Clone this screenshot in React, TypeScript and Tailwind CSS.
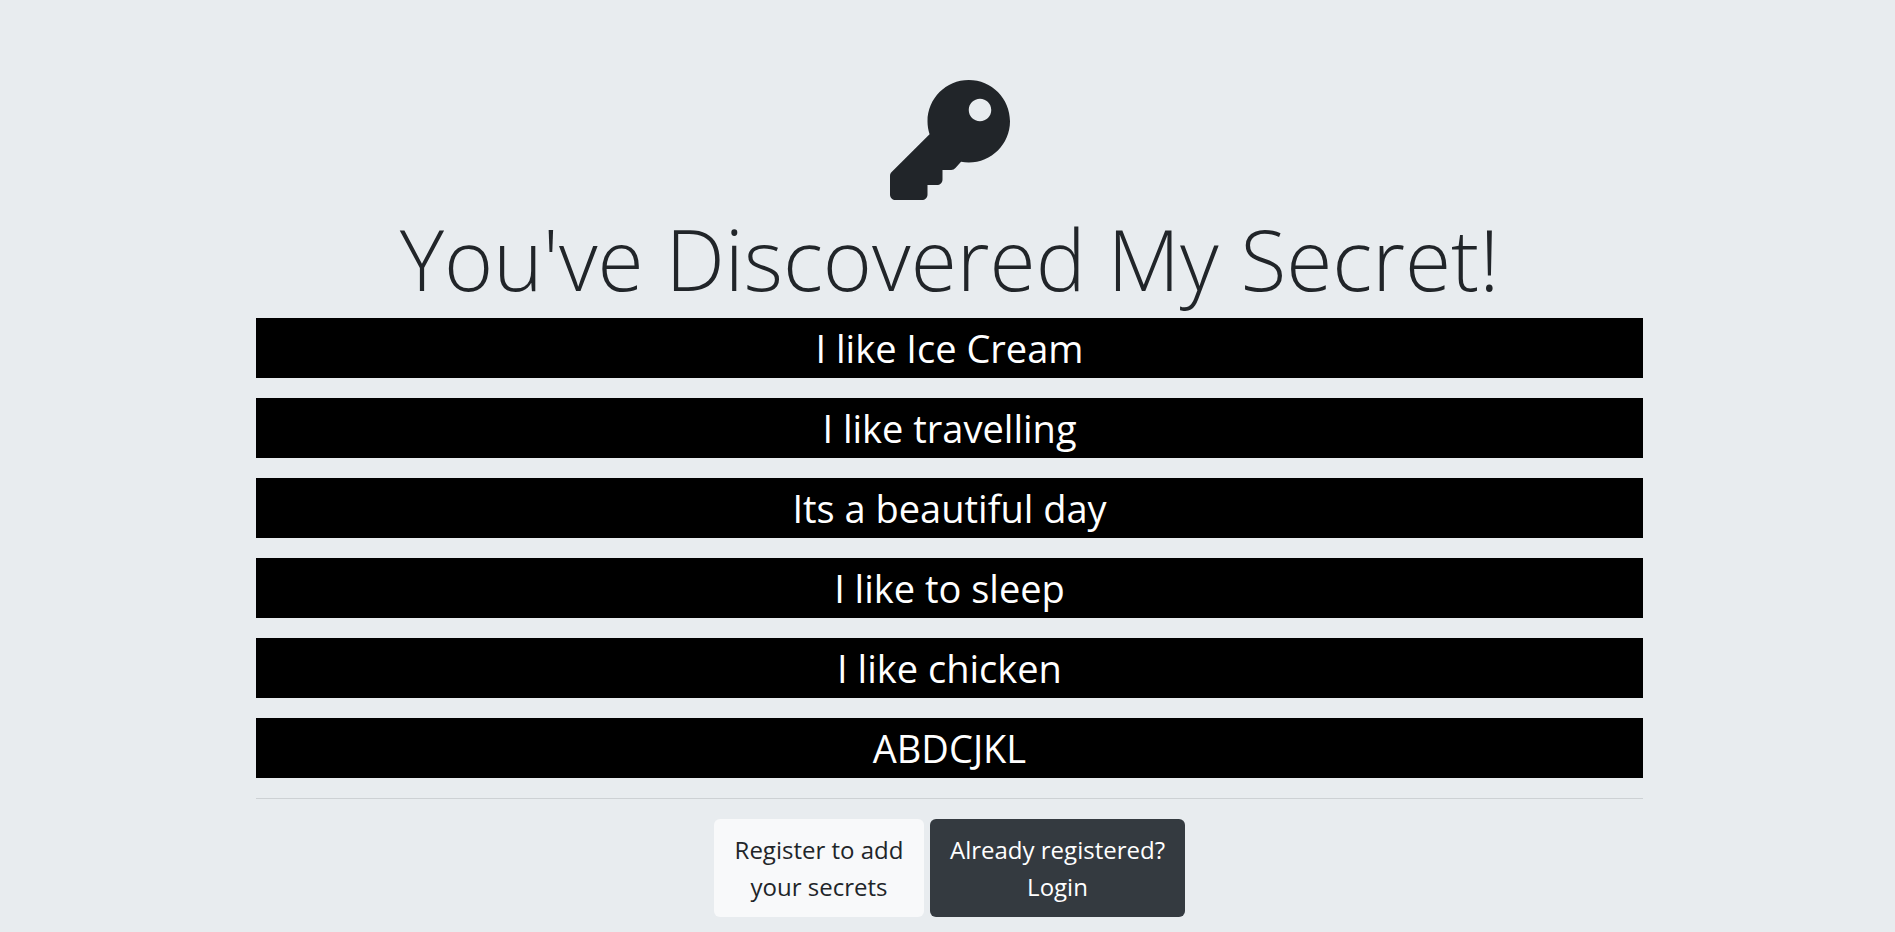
import { FaKey } from "react-icons/fa";

const secrets = [
  "I like Ice Cream",
  "I like travelling",
  "Its a beautiful day",
  "I like to sleep",
  "I like chicken",
  "ABDCJKL",
];

export default function App() {
  return (
    <main className="min-h-screen bg-[#e8ecef] pt-20 pr-8 pb-3 pl-9 text-center font-['Open_Sans','Noto_Sans',sans-serif] text-[#212529]">
      <div className="mx-auto max-w-[1387px]">
        <FaKey className="mx-auto size-30" aria-hidden="true" />
        <h1 className="mt-3 mb-3 text-[84px] leading-[94px] font-light">
          You've Discovered My Secret!
        </h1>
        <ul className="flex flex-col gap-5">
          {secrets.map((secret) => (
            <li key={secret} className="bg-black text-[38px] leading-[60px] text-white">
              {secret}
            </li>
          ))}
        </ul>
        <hr className="my-5 border-[#cdd1d4]" />
        <div className="flex justify-center gap-[6px] text-[24px] leading-[37px]">
          <a href="/register" className="w-[210px] rounded-md bg-[#f8f9fa] px-4 py-3">
            Register to add your secrets
          </a>
          <a href="/login" className="w-[255px] rounded-md bg-[#343a40] px-4 py-3 text-white">
            Already registered? Login
          </a>
        </div>
      </div>
    </main>
  );
}
